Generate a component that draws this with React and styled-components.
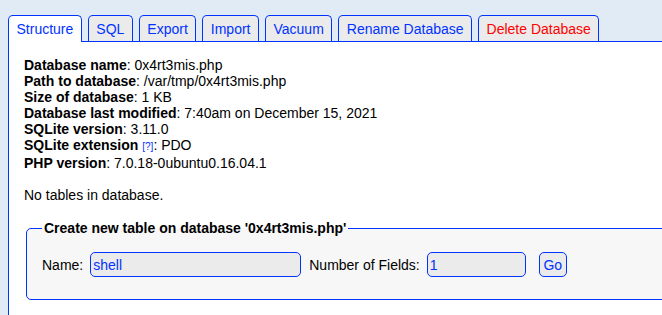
import React from "react";
import styled, { createGlobalStyle } from "styled-components";

const GlobalStyle = createGlobalStyle`
  html, body {
    margin: 0;
    padding: 0;
    background-color: #e0ebf6;
    font-family: "Liberation Sans", Arial, sans-serif;
    font-size: 14px;
    color: #000;
    overflow: hidden;
  }
`;

const tabs = [
  { label: "Structure", active: true },
  { label: "SQL" },
  { label: "Export" },
  { label: "Import" },
  { label: "Vacuum" },
  { label: "Rename Database" },
  { label: "Delete Database", danger: true },
];

const info = [
  ["Database name", "0x4rt3mis.php"],
  ["Path to database", "/var/tmp/0x4rt3mis.php"],
  ["Size of database", "1 KB"],
  ["Database last modified", "7:40am on December 15, 2021"],
  ["SQLite version", "3.11.0"],
  ["SQLite extension", "PDO", true],
  ["PHP version", "7.0.18-0ubuntu0.16.04.1"],
];

const App = () => {
  return (
    <>
      <GlobalStyle />
      <Page>
        <TabBar>
          {tabs.map((tab) => (
            <Tab key={tab.label} $active={tab.active} $danger={tab.danger}>
              {tab.label}
            </Tab>
          ))}
        </TabBar>
        <Main>
          <InfoList>
            {info.map(([name, value, help]) => (
              <InfoRow key={name}>
                <b>{name}</b>
                {help && (
                  <>
                    {" "}
                    <Help>[?]</Help>
                  </>
                )}
                : {value}
              </InfoRow>
            ))}
          </InfoList>
          <Note>No tables in database.</Note>
          <Fieldset>
            <Legend>Create new table on database '0x4rt3mis.php'</Legend>
            <FormRow>
              <Label>Name:</Label>
              <Input $width={211} defaultValue="shell" />
              <Label>Number of Fields:</Label>
              <Input $width={99} defaultValue="1" />
              <GoButton>Go</GoButton>
            </FormRow>
          </Fieldset>
        </Main>
      </Page>
    </>
  );
};

export default App;

const Page = styled.div`
  padding: 15px 0 0 8px;
  width: 1000px;
`;

const TabBar = styled.div`
  display: flex;
  align-items: flex-end;
  gap: 6px;
  position: relative;
  z-index: 1;
`;

const Tab = styled.a`
  display: block;
  box-sizing: border-box;
  height: ${(p) => (p.$active ? "27px" : "26px")};
  margin-bottom: ${(p) => (p.$active ? "-1px" : "0")};
  padding: 5px 7.5px 0;
  line-height: 16px;
  border: 1px solid #0033ff;
  border-bottom: none;
  border-radius: 5px 5px 0 0;
  background-color: ${(p) => (p.$active ? "#fff" : "#ebebeb")};
  color: ${(p) => (p.$danger ? "#ff0000" : "#0033ff")};
  cursor: pointer;
`;

const Main = styled.div`
  border: 1px solid #0033ff;
  background: #fff;
  padding: 15px 15px 40px;
`;

const InfoList = styled.div`
  line-height: 16px;
`;

const InfoRow = styled.div``;

const Help = styled.a`
  font-size: 10px;
  color: #0033ff;
`;

const Note = styled.div`
  margin-top: 16px;
  line-height: 16px;
`;

const Fieldset = styled.fieldset`
  margin: 17px 2px 0;
  padding: 16px 15px 22px;
  border: 1px solid #0033ff;
  border-radius: 5px;
  background: #f7f7f7;
`;

const Legend = styled.legend`
  font-weight: bold;
  padding: 0 2px;
  line-height: 16px;
`;

const FormRow = styled.div`
  display: flex;
  align-items: center;
`;

const Label = styled.span`
  margin-right: 7px;
`;

const Input = styled.input`
  box-sizing: border-box;
  width: ${(p) => p.$width}px;
  height: 25px;
  margin-right: 8px;
  padding: 2px 2px;
  font-family: "Liberation Sans", Arial, sans-serif;
  font-size: 14px;
  color: #0033ff;
  background-color: #ebebeb;
  border: 1px solid #0033ff;
  border-radius: 5px;
  outline: none;
`;

const GoButton = styled.button`
  box-sizing: border-box;
  width: 28px;
  height: 25px;
  margin-left: 5px;
  padding: 0;
  font-family: "Liberation Sans", Arial, sans-serif;
  font-size: 14px;
  color: #0033ff;
  background-color: #ebebeb;
  border: 1px solid #0033ff;
  border-radius: 5px;
`;
